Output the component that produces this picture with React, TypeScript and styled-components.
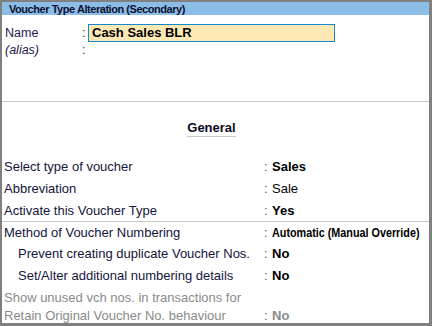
import styled, { createGlobalStyle } from "styled-components";

const Global = createGlobalStyle`
html, body {
  margin: 0;
  padding: 0;
  background: #fff;
}
body {
  font-family: "Liberation Sans", Arial, sans-serif;
}
`

const Frame = styled.div`
width: 432px;
height: 326px;
box-sizing: border-box;
border-style: solid;
border-color: #808080;
border-width: 2px 3px 3px 2px;
display: flex;
flex-direction: column;
overflow: hidden;
background: #fff;
`

const TitleBar = styled.div`
height: 13px;
background: #8bbde6;
color: #101030;
font-size: 11px;
font-weight: 700;
letter-spacing: -0.45px;
line-height: 14px;
padding-left: 7px;
white-space: nowrap;
`

const TopSection = styled.div`
height: 87px;
border-bottom: 1px solid #c8c8c8;
padding-top: 8px;
box-sizing: border-box;
`

const NameRow = styled.div<{ $h: number }>`
display: grid;
grid-template-columns: 77px 6px 247px;
align-items: center;
padding-left: 3px;
height: ${(p) => p.$h}px;
font-size: 12.5px;
color: #1e1a4d;
`

const NameLabel = styled.span<{ $italic?: boolean }>`
font-style: ${(p) => (p.$italic ? "italic" : "normal")};
`

const Colon = styled.span`
color: #4a2a2a;
`

const NameInput = styled.div`
height: 18px;
box-sizing: border-box;
border: 1px solid #1488cc;
background: #fde8b4;
font-size: 13px;
font-weight: 700;
color: #000;
line-height: 16px;
padding-left: 3px;
`

const HeadingWrap = styled.div`
display: flex;
justify-content: center;
padding-top: 18px;
padding-right: 8px;
margin-bottom: 18px;
`

const Heading = styled.span`
font-size: 13px;
font-weight: 700;
color: #0a0a28;
line-height: 16px;
border-bottom: 1px solid #c8c8c8;
`

const Group = styled.div<{ $sep?: boolean }>`
border-top: ${(p) => (p.$sep ? "1px solid #c8c8c8" : "none")};
`

const Row = styled.div<{ $h?: number; $muted?: boolean }>`
display: grid;
grid-template-columns: 262px 8px 1fr;
align-items: center;
height: ${(p) => p.$h ?? 22}px;
font-size: 13px;
color: ${(p) => (p.$muted ? "#8a8a8a" : "#14143c")};
white-space: nowrap;
`

const Label = styled.span<{ $indent?: boolean }>`
padding-left: ${(p) => (p.$indent ? 16 : 2)}px;
`

const RowColon = styled.span`
color: #555;
`

const Value = styled.span<{ $bold?: boolean; $narrow?: boolean; $muted?: boolean }>`
font-weight: ${(p) => (p.$bold ? 700 : 400)};
color: ${(p) => (p.$muted ? "#8a8a8a" : "#000")};
display: inline-block;
transform: ${(p) => (p.$narrow ? "scaleX(0.83)" : "none")};
transform-origin: left center;
font-size: 13px;
`

export default function App() {
    return (
        <>
            <Global />
            <Frame>
                <TitleBar>Voucher Type Alteration (Secondary)</TitleBar>
                <TopSection>
                    <NameRow $h={19}>
                        <NameLabel>Name</NameLabel>
                        <Colon>:</Colon>
                        <NameInput>Cash Sales BLR</NameInput>
                    </NameRow>
                    <NameRow $h={16}>
                        <NameLabel $italic>(alias)</NameLabel>
                        <Colon>:</Colon>
                        <span />
                    </NameRow>
                </TopSection>
                <HeadingWrap>
                    <Heading>General</Heading>
                </HeadingWrap>
                <Group>
                    <Row>
                        <Label>Select type of voucher</Label>
                        <RowColon>:</RowColon>
                        <Value $bold>Sales</Value>
                    </Row>
                    <Row>
                        <Label>Abbreviation</Label>
                        <RowColon>:</RowColon>
                        <Value>Sale</Value>
                    </Row>
                    <Row>
                        <Label>Activate this Voucher Type</Label>
                        <RowColon>:</RowColon>
                        <Value $bold>Yes</Value>
                    </Row>
                </Group>
                <Group $sep>
                    <Row $h={20}>
                        <Label>Method of Voucher Numbering</Label>
                        <RowColon>:</RowColon>
                        <Value $bold $narrow>Automatic (Manual Override)</Value>
                    </Row>
                    <Row>
                        <Label $indent>Prevent creating duplicate Voucher Nos.</Label>
                        <RowColon>:</RowColon>
                        <Value $bold>No</Value>
                    </Row>
                    <Row>
                        <Label $indent>Set/Alter additional numbering details</Label>
                        <RowColon>:</RowColon>
                        <Value $bold>No</Value>
                    </Row>
                    <Row $h={22} $muted>
                        <Label>Show unused vch nos. in transactions for</Label>
                        <span />
                        <span />
                    </Row>
                    <Row $h={13} $muted>
                        <Label>Retain Original Voucher No. behaviour</Label>
                        <RowColon>:</RowColon>
                        <Value $bold $muted>No</Value>
                    </Row>
                </Group>
            </Frame>
        </>
    )
}
